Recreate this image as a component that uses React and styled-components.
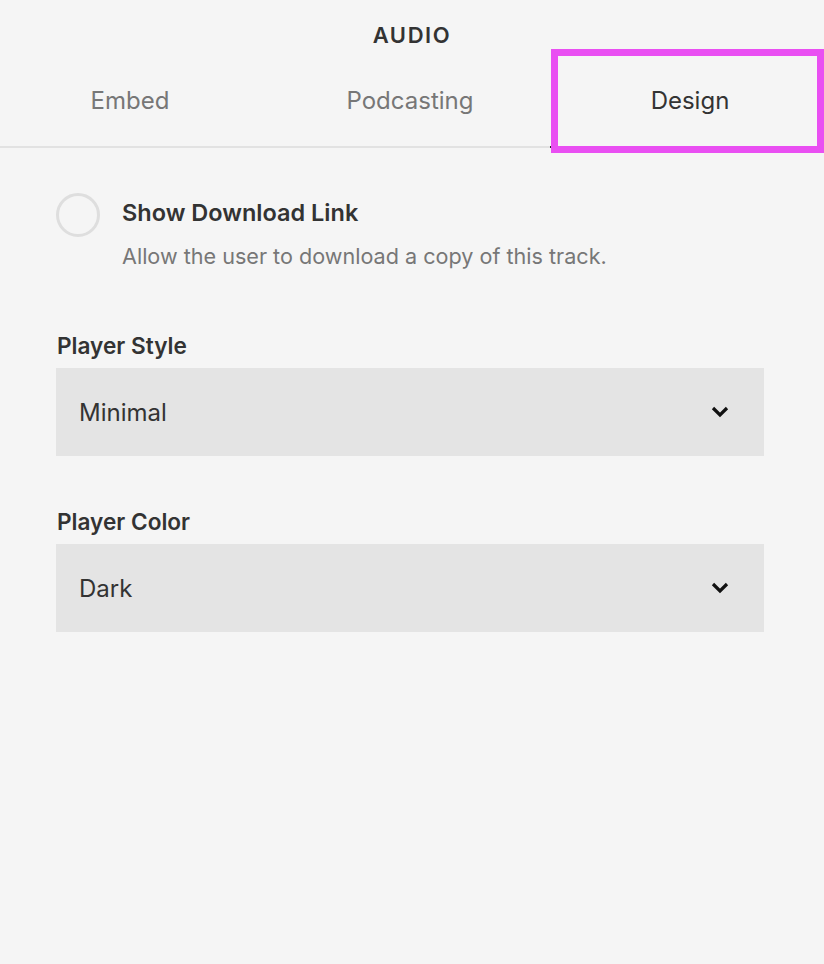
import styled, { createGlobalStyle } from 'styled-components';

const GlobalStyle = createGlobalStyle`
    html, body {
        margin: 0;
        padding: 0;
        background: #f5f5f5;
    }
    body {
        font-family: Inter, "Noto Sans", "Liberation Sans", sans-serif;
        -webkit-font-smoothing: antialiased;
    }
`;

const Panel = styled.div`
    position: relative;
    width: 824px;
    height: 964px;
    background: #f5f5f5;
    overflow: hidden;
`;

const Title = styled.div`
    text-align: center;
    font-size: 22px;
    font-weight: 600;
    letter-spacing: 1.6px;
    color: #333;
    padding-top: 23px;
    line-height: 24px;
`;

const TabRow = styled.div`
    display: grid;
    grid-template-columns: repeat(3, 280px);
    margin-left: -10px;
    margin-top: 19px;
    border-bottom: 2px solid #e2e2e2;
`;

const Tab = styled.div`
    text-align: center;
    font-size: 24px;
    line-height: 26px;
    padding: 22px 0 32px;
    color: ${(p) => (p.active ? '#333' : '#777')};
    margin-bottom: -2px;
    border-bottom: 2px solid ${(p) => (p.active ? '#222' : 'transparent')};
`;

const Highlight = styled.div`
    position: absolute;
    left: 551px;
    top: 49px;
    width: 259px;
    height: 90px;
    border: 7px solid #e94ff2;
`;

const Body = styled.div`
    padding: 45px 60px 0 56px;
`;

const ToggleRow = styled.div`
    display: flex;
    gap: 22px;
`;

const Circle = styled.div`
    flex: none;
    width: 38px;
    height: 38px;
    border-radius: 50%;
    border: 3px solid #dedede;
`;

const ToggleText = styled.div`
    display: flex;
    flex-direction: column;
    padding-top: 6px;
`;

const ToggleTitle = styled.div`
    font-size: 23.5px;
    font-weight: 600;
    line-height: 28px;
    color: #333;
`;

const ToggleHint = styled.div`
    font-size: 21.6px;
    line-height: 26px;
    color: #777;
    margin-top: 16px;
`;

const Field = styled.div`
    margin-top: ${(p) => p.top}px;
`;

const Label = styled.div`
    font-size: 22.6px;
    font-weight: 600;
    line-height: 26px;
    color: #333;
    padding-left: 1px;
`;

const Select = styled.div`
    margin-top: 9px;
    height: 88px;
    background: #e4e4e4;
    display: flex;
    align-items: center;
    justify-content: space-between;
    padding: 0 34px 0 23px;
    font-size: 24px;
    color: #333;
`;

const Chevron = () => (
    <svg width="20" height="14" viewBox="0 0 20 14">
        <path d="M3 3 L10 10 L17 3" fill="none" stroke="#111" strokeWidth="3.2" />
    </svg>
);

const App = () => {
    return (
        <Panel>
            <GlobalStyle />
            <Title>AUDIO</Title>
            <TabRow>
                <Tab>Embed</Tab>
                <Tab>Podcasting</Tab>
                <Tab active>Design</Tab>
            </TabRow>
            <Body>
                <ToggleRow>
                    <Circle />
                    <ToggleText>
                        <ToggleTitle>Show Download Link</ToggleTitle>
                        <ToggleHint>Allow the user to download a copy of this track.</ToggleHint>
                    </ToggleText>
                </ToggleRow>
                <Field top={64}>
                    <Label>Player Style</Label>
                    <Select>
                        Minimal
                        <Chevron />
                    </Select>
                </Field>
                <Field top={53}>
                    <Label>Player Color</Label>
                    <Select>
                        Dark
                        <Chevron />
                    </Select>
                </Field>
            </Body>
            <Highlight />
        </Panel>
    );
};

export default App;
